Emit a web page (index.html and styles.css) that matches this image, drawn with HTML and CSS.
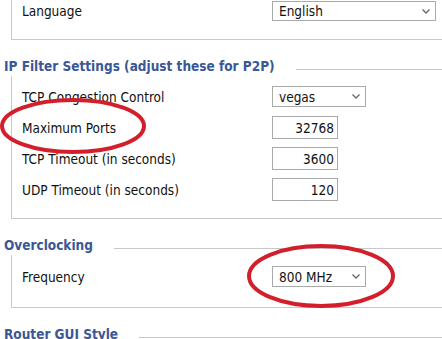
FILE: index.html
```html
<!DOCTYPE html>
<html lang="en">

<head>
    <meta charset="UTF-8">
    <title>Router Settings</title>
    <link rel="stylesheet" href="styles.css">
</head>

<body>
    <div class="page">
        <div class="box box-top">
            <div class="row">
                <label>Language</label>
                <span class="select wide">
                    <select><option>English</option></select>
                    <svg viewBox="0 0 8 5"><path d="M0.5 0.5 L4 4 L7.5 0.5"/></svg>
                </span>
            </div>
        </div>

        <div class="legend">IP Filter Settings (adjust these for P2P)</div>
        <div class="box box-ip">
            <div class="row">
                <label>TCP Congestion Control</label>
                <span class="select">
                    <select><option>vegas</option></select>
                    <svg viewBox="0 0 8 5"><path d="M0.5 0.5 L4 4 L7.5 0.5"/></svg>
                </span>
            </div>
            <div class="row">
                <label>Maximum Ports</label>
                <input type="text" value="32768">
            </div>
            <div class="row">
                <label>TCP Timeout (in seconds)</label>
                <input type="text" value="3600">
            </div>
            <div class="row">
                <label>UDP Timeout (in seconds)</label>
                <input type="text" value="120">
            </div>
        </div>

        <div class="legend">Overclocking</div>
        <div class="box box-oc">
            <div class="row">
                <label>Frequency</label>
                <span class="select">
                    <select><option>800 MHz</option></select>
                    <svg viewBox="0 0 8 5"><path d="M0.5 0.5 L4 4 L7.5 0.5"/></svg>
                </span>
            </div>
        </div>

        <div class="legend">Router GUI Style</div>

        <!-- hand drawn annotation circles -->
        <svg class="marks" width="442" height="339">
            <ellipse cx="73" cy="126" rx="71" ry="26"/>
            <ellipse cx="321" cy="276" rx="72" ry="30"/>
        </svg>
    </div>
</body>

</html>
```

FILE: styles.css
```css
body {
    margin: 0;
    font-family: "DejaVu Sans Condensed", "DejaVu Sans", sans-serif;
    font-size: 13.5px;
    color: #111;
    background-color: #fff;
    overflow: hidden;
}

.page {
    position: relative;
    width: 442px;
    height: 339px;
    overflow: hidden;
}

.box {
    margin-left: 11px;
    padding-left: 10px;
    border-left: 1px solid #c8c8c8;
    border-bottom: 1px solid #c8c8c8;
}

.box-top {
    padding-top: 1px;
    padding-bottom: 18px;
}

.box-top .row {
    height: 20px;
}

.box-ip {
    padding-top: 5px;
    padding-bottom: 13px;
}

.box-oc {
    padding-top: 6px;
    padding-bottom: 15px;
}

.legend {
    display: flex;
    align-items: center;
    height: 20px;
    margin-top: 16px;
    padding-left: 4px;
    font-weight: bold;
    font-size: 13.5px;
    color: #3b5796;
}

.legend::after {
    content: "";
    flex: 1;
    margin-left: 21px;
    margin-top: 6px;
    border-top: 1px solid #c8c8c8;
}

.row {
    display: flex;
    align-items: center;
    height: 31px;
}

.row label {
    width: 250px;
}

.select {
    position: relative;
    display: inline-block;
}

.select select {
    appearance: none;
    width: 94px;
    height: 21px;
    padding: 0 0 0 6px;
    border: 1px solid #a9a9a9;
    border-radius: 0;
    background: #fff;
    font: inherit;
    color: #111;
}

.select.wide select {
    width: 164px;
    height: 20px;
}

.select svg {
    position: absolute;
    right: 6px;
    top: 8px;
    width: 8px;
    height: 5px;
    fill: none;
    stroke: #666;
    stroke-width: 1.3;
}

input[type="text"] {
    width: 66px;
    height: 23px;
    box-sizing: border-box;
    padding: 0 3px 0 0;
    border: 1px solid #a9a9a9;
    text-align: right;
    font: inherit;
    color: #111;
}

.marks {
    position: absolute;
    left: 0;
    top: 0;
    pointer-events: none;
}

.marks ellipse {
    fill: none;
    stroke: #d31f2c;
    stroke-width: 4;
}
```
